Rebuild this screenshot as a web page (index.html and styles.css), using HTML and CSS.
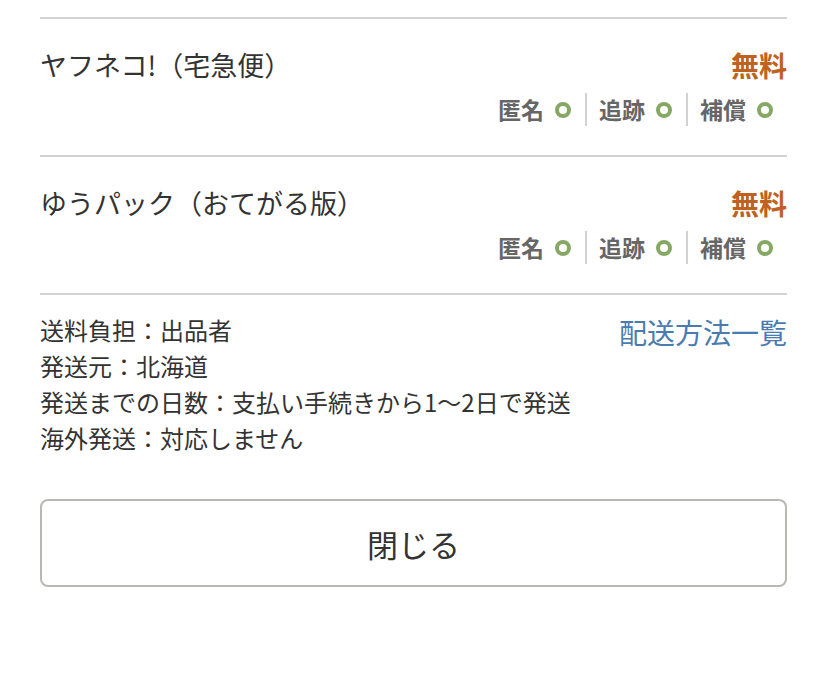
FILE: index.html
```html
<!DOCTYPE html>
<html lang="ja">
<head>
<meta charset="utf-8">
<title>配送方法</title>
<link rel="stylesheet" href="styles.css">
</head>
<body>
<div class="page">
  <div class="method">
    <div class="method-head">
      <span class="method-name">ヤフネコ!（宅急便）</span>
      <span class="price">無料</span>
    </div>
    <div class="badges">
      <span class="badge">匿名<i class="ok"></i></span>
      <span class="badge">追跡<i class="ok"></i></span>
      <span class="badge">補償<i class="ok"></i></span>
    </div>
  </div>
  <div class="method">
    <div class="method-head">
      <span class="method-name">ゆうパック（おてがる版）</span>
      <span class="price">無料</span>
    </div>
    <div class="badges">
      <span class="badge">匿名<i class="ok"></i></span>
      <span class="badge">追跡<i class="ok"></i></span>
      <span class="badge">補償<i class="ok"></i></span>
    </div>
  </div>
  <div class="info">
    <ul class="info-list">
      <li>送料負担：出品者</li>
      <li>発送元：北海道</li>
      <li>発送までの日数：支払い手続きから1〜2日で発送</li>
      <li>海外発送：対応しません</li>
    </ul>
    <a class="list-link" href="#">配送方法一覧</a>
  </div>
  <button class="close-btn" type="button">閉じる</button>
</div>
</body>
</html>
```

FILE: styles.css
```css
html, body {
  margin: 0;
  padding: 0;
  background: #fff;
}
body {
  font-family: "Noto Sans CJK JP", "Noto Sans", "Liberation Sans", sans-serif;
  color: #333;
}
.page {
  padding: 17px 40px 0;
}
.method {
  border-top: 2px solid #d2d2d2;
  padding: 28px 0 29px;
  display: flex;
  flex-direction: column;
  gap: 10px;
}
.method-head {
  display: flex;
  justify-content: space-between;
  align-items: center;
  height: 36px;
}
.method-name {
  font-size: 27px;
  line-height: 36px;
  color: #333;
}
.price {
  font-size: 28px;
  line-height: 36px;
  font-weight: bold;
  color: #c0621f;
}
.badges {
  display: flex;
  justify-content: flex-end;
  height: 33px;
}
.badge {
  display: flex;
  align-items: center;
  gap: 11px;
  padding: 0 14px 0 12px;
  font-size: 23px;
  line-height: 33px;
  font-weight: bold;
  color: #666;
}
.badge + .badge {
  border-left: 2px solid #d2d2d2;
}
.ok {
  display: block;
  flex: none;
  box-sizing: border-box;
  width: 16px;
  height: 16px;
  border: 4px solid #86a865;
  border-radius: 50%;
}
.info {
  border-top: 2px solid #d2d2d2;
  padding-top: 17px;
  display: flex;
  justify-content: space-between;
  align-items: flex-start;
}
.info-list {
  list-style: none;
  margin: 0;
  padding: 0;
  font-size: 24px;
  line-height: 36px;
  color: #333;
}
.list-link {
  font-size: 28px;
  line-height: 40px;
  color: #4a7bb0;
  text-decoration: none;
}
.close-btn {
  display: block;
  width: 100%;
  margin-top: 43px;
  height: 88px;
  border: 2px solid #b8b8b4;
  border-radius: 8px;
  background: #fff;
  font-family: inherit;
  font-size: 31px;
  color: #333;
  cursor: pointer;
}
```
